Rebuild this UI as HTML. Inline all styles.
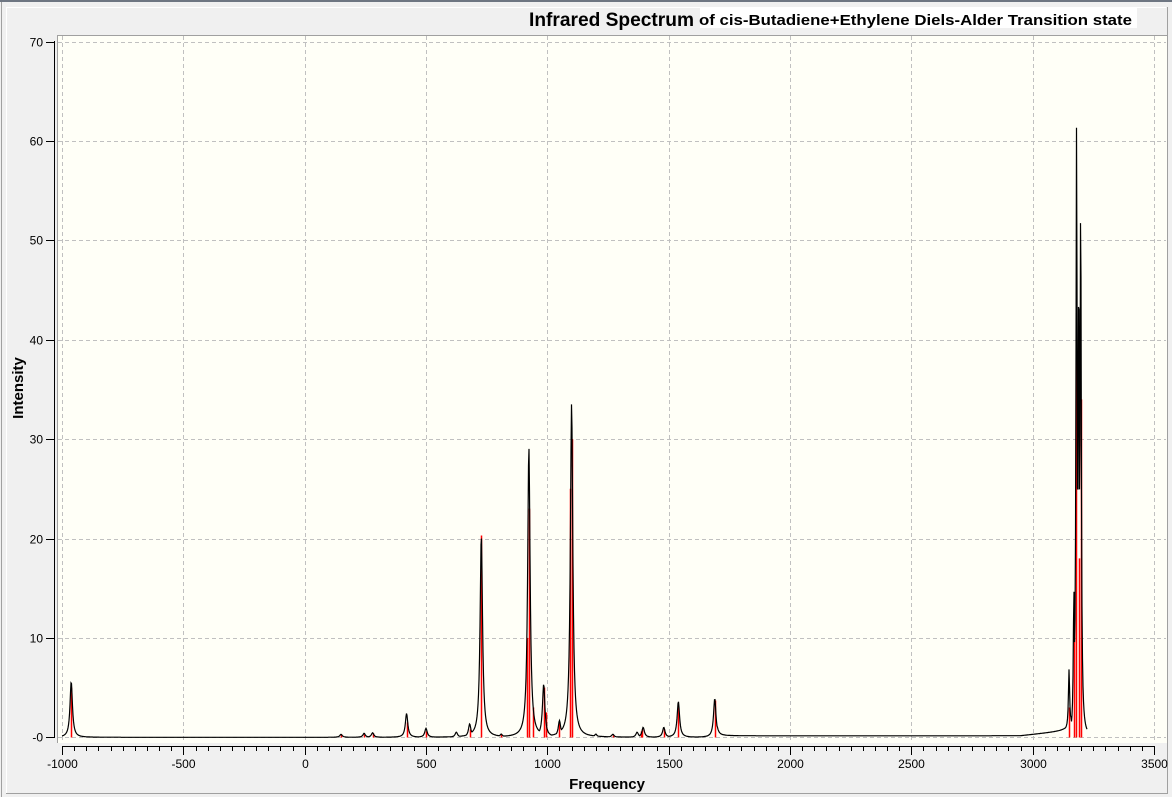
<!DOCTYPE html>
<html><head><meta charset="utf-8"><style>
html,body{margin:0;padding:0;background:#f0f0f0;}
body{width:1172px;height:797px;overflow:hidden;position:relative;font-family:"Liberation Sans",sans-serif;}
</style></head><body>
<svg id="s" width="1172" height="797" xmlns="http://www.w3.org/2000/svg" style="position:absolute;left:0;top:0">
<rect x="0" y="0" width="1172" height="797" fill="#f0f0f0"/>
<rect x="0" y="0" width="1172" height="2" fill="#6e7682"/>
<line x1="1.5" y1="2" x2="1.5" y2="797" stroke="#a0a0a0"/>
<line x1="6.5" y1="7" x2="6.5" y2="793" stroke="#fff"/>
<line x1="6" y1="7.5" x2="1166" y2="7.5" stroke="#fff"/>
<line x1="1167.5" y1="7" x2="1167.5" y2="794" stroke="#a0a0a0"/>
<line x1="6" y1="793.5" x2="1168" y2="793.5" stroke="#a0a0a0"/>
<rect x="700" y="8" width="437" height="20" fill="#fff"/>
<text x="529" y="26" font-weight="bold" font-size="19" textLength="165" lengthAdjust="spacingAndGlyphs">Infrared Spectrum</text>
<text x="699" y="25" font-weight="bold" font-size="15" textLength="433" lengthAdjust="spacingAndGlyphs">of cis-Butadiene+Ethylene Diels-Alder Transition state</text>
<rect x="57" y="35" width="1110" height="708" fill="#fffff7"/>
<line x1="57" y1="35.5" x2="1167" y2="35.5" stroke="#a0a0a0"/>
<line x1="57.5" y1="35" x2="57.5" y2="743" stroke="#a0a0a0"/>
<g id="grid" stroke="#c0c0c0" stroke-dasharray="4,3"></g>
<g id="axes" stroke="#000"></g>
<g id="lbl" font-size="12" fill="#000"></g>
<g id="sticks" stroke="#f00" stroke-width="1.5"></g>
<path id="curve" fill="none" stroke="#000" stroke-width="1.2"/>
<text x="607" y="789" font-weight="bold" font-size="15" text-anchor="middle">Frequency</text>
<text transform="translate(23,388) rotate(-90)" font-weight="bold" font-size="15" text-anchor="middle">Intensity</text>
</svg>
<script>
var NS="http://www.w3.org/2000/svg";
function X(f){return 304.7+0.24266*f;}
function Y(v){return 737.3-9.94*v;}
function el(p,t,a){var e=document.createElementNS(NS,t);for(var k in a)e.setAttribute(k,a[k]);document.getElementById(p).appendChild(e);return e;}
for(var f=-1000;f<=3500;f+=500){var x=Math.round(X(f))+0.5;el("grid","line",{x1:x,y1:36,x2:x,y2:742});}
for(var v=0;v<=70;v+=10){var y=Math.round(Y(v))+0.5;el("grid","line",{x1:58,y1:y,x2:1166,y2:y});}
el("axes","line",{x1:54.5,y1:41,x2:54.5,y2:738});
for(var v=0;v<=70;v+=10){var y=Math.round(Y(v))+0.5;el("axes","line",{x1:46,y1:y,x2:55,y2:y});
 var t=el("lbl","text",{x:43,y:y+4,"text-anchor":"end"});t.textContent=v==0?"-0":v;}
el("axes","line",{x1:62,y1:746.5,x2:1155,y2:746.5});
for(var f=-1000;f<=3500;f+=50){var x=Math.round(X(f))+0.5;var maj=(f%500==0);
 el("axes","line",{x1:x,y1:746,x2:x,y2:maj?755:751});
 if(maj){var t=el("lbl","text",{x:x,y:768,"text-anchor":"middle"});t.textContent=f;}}
var peaks=[[-962,5.6],[150,0.3],[245,0.4],[280,0.45],[420,2.4],[500,0.9],[625,0.5],[680,1.3],[728,20.3],[810,0.3],[924,29.2],[985,5.3],[1050,1.6],[1100,33.6],[1200,0.3],[1270,0.3],[1370,0.5],[1395,1],[1480,1],[1540,3.6],[1690,3.9],[3150,6],[3170,14],[3181,60.7],[3190,46],[3198,53.7]];
var sticks=[[-962,5],[150,0.3],[245,0.3],[280,0.4],[420,1.5],[500,0.6],[680,0.8],[728,20.3],[810,0.3],[918,10],[924,23],[940,3],[985,5],[993,2.5],[1050,1.5],[1095,25],[1100,30],[1270,0.2],[1385,0.6],[1390,0.8],[1480,0.8],[1540,3],[1690,3.7],[3150,3],[3170,12],[3180,42],[3190,18],[3198,34]];
sticks.forEach(function(s){var x=Math.round(X(s[0]))+0.5;el("sticks","line",{x1:x,y1:737.5,x2:x,y2:Y(s[1])});});
var d="";
for(var px=X(-1000);px<=X(3225);px+=0.5){var f=(px-304.7)/0.24266;var sum=0,mx=0;
 peaks.forEach(function(p){var g=p[0]>3100?3:6;var u=(f-p[0])/g;var l=p[1]/(1+u*u);sum+=l;if(l>mx)mx=l;});
 var v=mx+0.15*(sum-mx);
 if(f>1700&&f<3160)v+=0.15+Math.max(0,(f-2950)/200)*0.5;
 d+=(d?"L":"M")+px.toFixed(1)+","+Y(v).toFixed(1);}
document.getElementById("curve").setAttribute("d",d);
</script>
</body></html>
